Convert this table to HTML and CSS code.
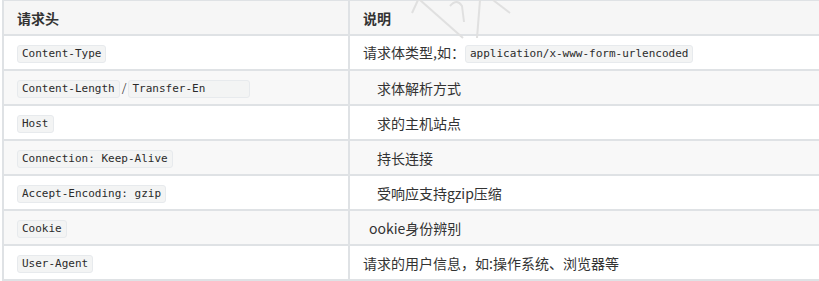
FILE: index.html
```html
<!DOCTYPE html>
<html lang="zh-CN">
<head>
<meta charset="utf-8">
<title>请求头</title>
<link rel="stylesheet" href="styles.css">
</head>
<body>
<div class="wrap">
  <table class="headers">
    <thead>
      <tr><th class="c1">请求头</th><th class="c2">说明</th></tr>
    </thead>
    <tbody>
      <tr><td><code>Content-Type</code></td><td>请求体类型,如：<code>application/x-www-form-urlencoded</code></td></tr>
      <tr><td><code>Content-Length</code><span class="slash">/</span><code class="wide">Transfer-En</code></td><td><span class="indent">求体解析方式</span></td></tr>
      <tr><td><code>Host</code></td><td><span class="indent">求的主机站点</span></td></tr>
      <tr><td><code>Connection: Keep-Alive</code></td><td><span class="indent">持长连接</span></td></tr>
      <tr><td><code>Accept-Encoding: gzip</code></td><td><span class="indent">受响应支持gzip压缩</span></td></tr>
      <tr><td><code>Cookie</code></td><td><span class="indent-sm">ookie身份辨别</span></td></tr>
      <tr><td><code>User-Agent</code></td><td>请求的用户信息，如:操作系统、浏览器等</td></tr>
    </tbody>
  </table>
  <svg class="watermark" width="130" height="40" viewBox="0 0 130 40" aria-hidden="true">
    <path d="M20 0 L63 38" />
    <path d="M18 0 L12 13" />
    <path d="M50 6 Q57 -2 62 6 L64 22" />
    <path d="M80 0 L77 38" />
    <path d="M93 0 L110 13" />
  </svg>
</div>
</body>
</html>
```

FILE: styles.css
```css
html, body {
  margin: 0;
  padding: 0;
  background: #ffffff;
  overflow: hidden;
}

.wrap {
  position: relative;
  width: 819px;
  height: 281px;
  overflow: hidden;
}

.headers {
  border-collapse: collapse;
  margin: -1px 0 0 2px;
  width: 840px;
  table-layout: fixed;
  font-family: "Noto Sans CJK SC", "Noto Sans", sans-serif;
  font-size: 14px;
  color: #333333;
}

.headers th,
.headers td {
  border: 2px solid #dfe2e5;
  height: 33px;
  padding: 0 13px;
  text-align: left;
  vertical-align: middle;
  white-space: nowrap;
  line-height: 20px;
}

.headers th {
  font-weight: bold;
  background: #f6f6f6;
}

.headers .c1 {
  width: 318px;
}

.headers tbody tr:nth-child(2n) td {
  background: #f8f8f8;
}

.headers tbody tr:nth-child(2n+1) td {
  background: #ffffff;
}

code {
  font-family: "DejaVu Sans Mono", "Liberation Mono", monospace;
  font-size: 11px;
  line-height: 16px;
  display: inline-block;
  padding: 0 4px;
  background: #f3f4f4;
  border: 1px solid #e7eaed;
  border-radius: 3px;
  color: #2b2b2b;
  vertical-align: middle;
}

code.wide {
  width: 112px;
}

.slash {
  display: inline-block;
  margin: 0 1px 0 2px;
  font-family: "Open Sans", sans-serif;
  font-size: 14px;
  font-weight: 300;
  vertical-align: middle;
}

.indent {
  margin-left: 14px;
}

.indent-sm {
  margin-left: 6px;
}

.watermark {
  position: absolute;
  left: 400px;
  top: 0;
  fill: none;
  stroke: #e0e0e0;
  stroke-width: 2;
}
```
